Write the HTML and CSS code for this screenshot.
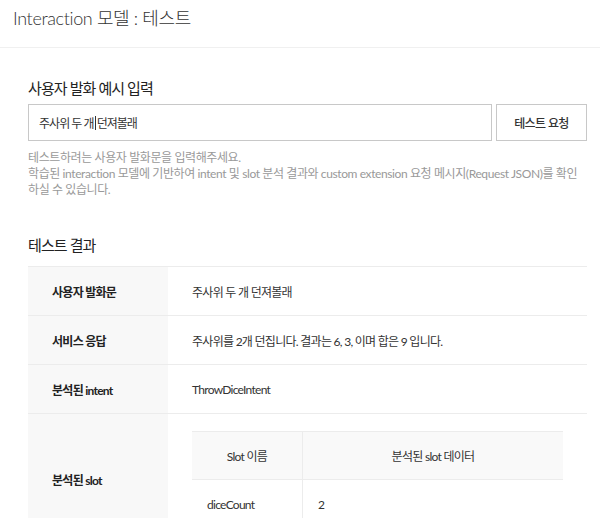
FILE: index.html
```html
<!DOCTYPE html>
<html lang="ko">
<head>
<meta charset="utf-8">
<title>Interaction 모델 : 테스트</title>
<link rel="stylesheet" href="styles.css">
</head>
<body>
<header class="page-header">
  <h1 class="page-title">Interaction 모델 : 테스트</h1>
</header>
<main class="content">
  <section class="input-section">
    <h2 class="section-title">사용자 발화 예시 입력</h2>
    <div class="input-row">
      <div class="text-input">주사위 두 개<span class="caret"></span>던져볼래</div>
      <button class="test-btn" type="button">테스트 요청</button>
    </div>
    <p class="help">테스트하려는 사용자 발화문을 입력해주세요.<br>학습된 interaction 모델에 기반하여 intent 및 slot 분석 결과와 custom extension 요청 메시지(Request JSON)를 확인하실 수 있습니다.</p>
  </section>
  <section class="result-section">
    <h2 class="section-title">테스트 결과</h2>
    <div class="result-table">
      <div class="row">
        <div class="label">사용자 발화문</div>
        <div class="value">주사위 두 개 던져볼래</div>
      </div>
      <div class="row">
        <div class="label">서비스 응답</div>
        <div class="value">주사위를 2개 던집니다. 결과는 6, 3, 이며 합은 9 입니다.</div>
      </div>
      <div class="row">
        <div class="label">분석된 intent</div>
        <div class="value">ThrowDiceIntent</div>
      </div>
      <div class="row">
        <div class="label">분석된 slot</div>
        <div class="value slot-cell">
          <div class="slot-table">
            <div class="slot-head">Slot 이름</div>
            <div class="slot-head">분석된 slot 데이터</div>
            <div class="slot-data">diceCount</div>
            <div class="slot-data">2</div>
          </div>
        </div>
      </div>
    </div>
  </section>
</main>
</body>
</html>
```

FILE: styles.css
```css
* { box-sizing: border-box; }
body {
  margin: 0;
  font-family: Lato, "Noto Sans CJK KR", sans-serif;
  color: #333;
  background: #fff;
  letter-spacing: -0.045em;
}
.page-header {
  height: 48px;
  border-bottom: 1px solid #f0f0f0;
  padding: 6px 13px 0;
}
.page-title {
  margin: 0;
  font-size: 18px;
  font-weight: 300;
  line-height: 24px;
  color: #333;
  letter-spacing: -0.02em;
}
.content {
  padding: 0 13px 0 28px;
}
.section-title {
  margin: 0;
  font-size: 15px;
  font-weight: 400;
  line-height: 20px;
  color: #222;
  letter-spacing: -0.06em;
}
.input-section {
  padding-top: 30px;
}
.input-row {
  display: flex;
  gap: 4px;
  margin-top: 6px;
  height: 37px;
}
.text-input {
  flex: 1;
  border: 1px solid #c8c8c8;
  padding: 0 10px;
  display: flex;
  align-items: center;
  font-size: 12px;
  color: #333;
  letter-spacing: -0.08em;
}
.caret {
  display: inline-block;
  width: 1px;
  height: 14px;
  background: #333;
  margin: 0 1px;
}
.test-btn {
  width: 91px;
  border: 1px solid #c8c8c8;
  background: #fff;
  font-family: Lato, "Noto Sans CJK KR", sans-serif;
  font-size: 12px;
  font-weight: 500;
  color: #333;
  padding: 0;
  letter-spacing: -0.05em;
}
.help {
  margin: 9px 0 0;
  font-size: 12px;
  line-height: 16px;
  color: #999;
  letter-spacing: -0.033em;
}
.result-section {
  padding-top: 37px;
}
.result-table {
  margin-top: 11px;
  border-top: 1px solid #ececec;
}
.row {
  display: flex;
  border-bottom: 1px solid #ececec;
  min-height: 49px;
}
.label {
  width: 140px;
  flex: none;
  background: #f8f8f8;
  padding-left: 24px;
  display: flex;
  align-items: center;
  font-size: 12px;
  font-weight: 700;
  color: #222;
}
.value {
  flex: 1;
  padding-left: 24px;
  display: flex;
  align-items: center;
  font-size: 12px;
  color: #333;
}
.slot-cell {
  padding: 17px 24px 17px 24px;
}
.slot-table {
  flex: 1;
  display: grid;
  grid-template-columns: 111px 1fr;
  border-top: 1px solid #ececec;
}
.slot-head {
  height: 48px;
  background: #f9f9f9;
  border-bottom: 1px solid #ececec;
  display: flex;
  align-items: center;
  justify-content: center;
  font-size: 12px;
  color: #333;
}
.slot-head:first-child,
.slot-data:nth-child(3) {
  border-right: 1px solid #ececec;
}
.slot-data {
  height: 48px;
  display: flex;
  align-items: center;
  padding-left: 15px;
  font-size: 12px;
  color: #333;
}
```
